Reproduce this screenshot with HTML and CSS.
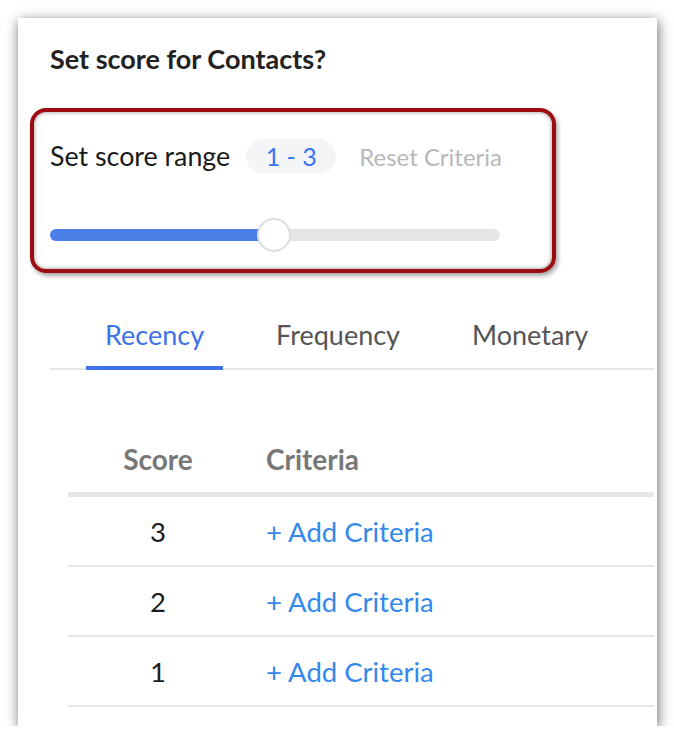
FILE: index.html
```html
<!DOCTYPE html>
<html>
<head lang="en">
	<meta charset="utf-8" name="viewport" content="width=device-width, initial-scale=1.0">
	<title>Set score</title>
	<link rel="stylesheet" href="styles.css">
</head>
<body>

	<div class="card">
		<section class="title">Set score for Contacts?</section>

		<!-- highlighted range box -->
		<section class="range">
			<div class="range-row">
				<span class="range-label">Set score range</span>
				<span class="range-pill">1 - 3</span>
				<span class="range-reset">Reset Criteria</span>
			</div>
			<div class="slider">
				<div class="slider-fill"></div>
				<div class="slider-thumb"></div>
			</div>
		</section>

		<section class="tabs">
			<span class="tab active">Recency</span>
			<span class="tab">Frequency</span>
			<span class="tab">Monetary</span>
		</section>

		<section class="score-table">
			<div class="row head">
				<span class="cell score">Score</span>
				<span class="cell crit">Criteria</span>
			</div>
			<div class="row">
				<span class="cell score">3</span>
				<span class="cell crit add">+ Add Criteria</span>
			</div>
			<div class="row">
				<span class="cell score">2</span>
				<span class="cell crit add">+ Add Criteria</span>
			</div>
			<div class="row">
				<span class="cell score">1</span>
				<span class="cell crit add">+ Add Criteria</span>
			</div>
		</section>
	</div>

</body>
</html>
```

FILE: styles.css
```css
* {
	margin: 0;
	padding: 0;
	box-sizing: border-box;
}

body {
	font-family: Lato, "Open Sans", sans-serif;
	background: #fff;
	color: #1c1c1c;
}

.card {
	margin: 18px 0 0 18px;
	width: 639px;
	height: 708px;
	background: #fff;
	padding-top: 28px;
	box-shadow: 1px 3px 12px rgba(0, 0, 0, 0.6);
	overflow: hidden;
}

.title {
	margin-left: 32px;
	font-size: 27px;
	line-height: 26px;
	font-weight: bold;
	color: #222;
}

/* red annotation box */
.range {
	margin: 36px 0 0 12px;
	width: 526px;
	height: 165px;
	border: 4px solid #9c0b10;
	border-radius: 16px;
	padding: 26px 0 0 16px;
	box-shadow: inset 0 0 4px rgba(0, 0, 0, 0.45), 2px 3px 4px rgba(0, 0, 0, 0.35);
}

.range-row {
	display: flex;
	align-items: center;
	height: 36px;
}

.range-label {
	font-size: 26.8px;
	color: #1a1a1a;
}

.range-pill {
	margin-left: 16px;
	width: 90px;
	height: 35px;
	border-radius: 18px;
	background: #f4f5f7;
	color: #3a78f0;
	font-size: 25px;
	display: flex;
	align-items: center;
	justify-content: center;
}

.range-reset {
	margin-left: 23px;
	font-size: 24px;
	color: #b8b8b8;
}

.slider {
	position: relative;
	margin-top: 55px;
	width: 450px;
	height: 12px;
	border-radius: 6px;
	background: #e5e5e5;
}

.slider-fill {
	width: 224px;
	height: 12px;
	border-radius: 6px 0 0 6px;
	background: #4d7fe8;
}

.slider-thumb {
	position: absolute;
	left: 207px;
	top: -11px;
	width: 34px;
	height: 34px;
	border-radius: 50%;
	background: #fff;
	border: 2px solid #dedede;
}

.tabs {
	display: flex;
	margin: 47px 3px 0 32px;
	border-bottom: 2px solid #e6e6e6;
}

.tab {
	margin-left: 34px;
	padding: 0 19px 16px;
	font-size: 27px;
	line-height: 30px;
	color: #555;
	border-bottom: 4px solid transparent;
	margin-bottom: -2px;
}

.tab:first-child {
	margin-left: 36px;
}

.tab.active {
	color: #3e72e8;
	border-bottom-color: #3e72e8;
}

.score-table {
	margin: 56px 3px 0 50px;
}

.row {
	display: grid;
	grid-template-columns: 180px 1fr;
	align-items: center;
	height: 70px;
	border-bottom: 2px solid #e6e6e6;
	font-size: 27.5px;
}

.row.head {
	height: 71px;
	border-bottom-width: 5px;
	font-size: 28px;
	font-weight: bold;
	color: #777;
}

.cell.score {
	text-align: center;
}

.cell.crit {
	padding-left: 18px;
}

.add {
	color: #3589ea;
}
```
